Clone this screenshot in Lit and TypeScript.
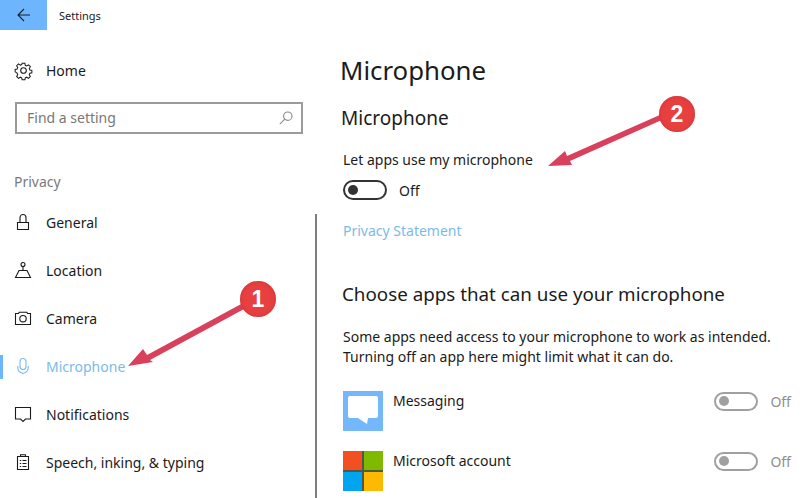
import { LitElement, html, css, svg } from "lit";
import { customElement } from "lit/decorators.js";

const icons: Record<string, unknown> = {
  lock: svg`<path d="M2.5 8.5h11v7h-11zM5 8.5V3.5a3 3 0 0 1 6 0v5" />`,
  location: svg`<circle cx="8" cy="2.5" r="2"/><path d="M8 4.5v4M.5 15.5L4 8.5h8l3.5 7z" />`,
  camera: svg`<path d="M.5 3.5h3l.7-1.2h7.6l.7 1.2h3v11H.5z"/><circle cx="8" cy="8.7" r="3.2"/>`,
  mic: svg`<rect x="5" y=".5" width="6" height="11" rx="3"/><path d="M2.8 8v2a5.2 5.2 0 0 0 10.4 0V8M8 15.2v1" />`,
  note: svg`<path d="M.5 1.5h15v11.5H10.5L8 15.5 5.5 13H.5z" />`,
  speech: svg`<path d="M2.5 2.5h11v13h-11zM5.5 2.5V.8h5v1.7M4.8 6.5h1.4M7.5 6.5h4M4.8 9.5h1.4M7.5 9.5h4M4.8 12.5h1.4M7.5 12.5h4" />`,
};

const navItems = [
  ["lock", "General"],
  ["location", "Location"],
  ["camera", "Camera"],
  ["mic", "Microphone"],
  ["note", "Notifications"],
  ["speech", "Speech, inking, & typing"],
] as const;

@customElement("app-root")
export class AppRoot extends LitElement {
  static styles = css`
    :host {
      display: block;
      position: relative;
      width: 808px;
      height: 498px;
      overflow: hidden;
      background: #fff;
      color: #1b1b1b;
      font-family: "Noto Sans", "Open Sans", sans-serif;
      font-size: 14px;
    }
    .titlebar { display: flex; align-items: center; height: 30px; }
    .back {
      width: 47px; height: 30px; background: #6db5fd;
      display: flex; align-items: center; justify-content: center;
    }
    .title { margin-left: 12px; font-size: 11px; }
    .body { display: flex; height: 468px; }
    .side { width: 315px; flex: none; }
    .home { display: flex; align-items: center; height: 24px; margin-top: 29px; }
    .ico { width: 46px; flex: none; display: flex; justify-content: center; margin-bottom: 2px; }
    .ico svg { fill: none; stroke: currentColor; stroke-width: 1.1; overflow: visible; }
    .txt { margin-bottom: 2px; }
    .search {
      box-sizing: border-box; margin: 19px 0 0 15px; width: 288px; height: 32px;
      border: 2px solid #9b9b9b; display: flex; align-items: center;
      justify-content: space-between; padding: 0 8px 0 10px; color: #777;
    }
    .search svg { fill: none; stroke: #8a8a8a; stroke-width: 1.1; }
    .group { margin: 37px 0 0 14px; height: 22px; line-height: 22px; color: #7a7a7a; }
    .item { position: relative; display: flex; align-items: center; height: 48px; }
    .item.active { color: #7cbbe8; }
    .item.active::before {
      content: ""; position: absolute; left: 0; top: 12px; width: 3px; height: 24px; background: #6db5fd;
    }
    .list { margin-top: 6px; }
    .rule { width: 2px; margin-top: 184px; background: #7d7d7d; flex: none; }
    .main { margin-left: 24px; flex: 1; min-width: 0; }
    h1 { margin: 20px 0 0 -1px; font-weight: 400; font-size: 25.8px; line-height: 40px; }
    h2 { margin: 14px 0 0; font-weight: 400; font-size: 19px; line-height: 28px; }
    .sub { margin-left: 1px; font-size: 18.8px; }
    .label { margin: 18px 0 0 2px; line-height: 20px; }
    .toggle-row { display: flex; align-items: center; margin: 10px 0 0 2px; height: 20px; gap: 12px; }
    .toggle {
      box-sizing: border-box; width: 44px; height: 20px; border: 2px solid #333; border-radius: 10px;
      display: flex; align-items: center; padding-left: 3px;
    }
    .toggle::before { content: ""; width: 10px; height: 10px; border-radius: 50%; background: #333; }
    .link { margin: 21px 0 0 2px; line-height: 20px; color: #7cbbe8; }
    .choose { margin-top: 39px; }
    .para { margin: 19px 0 0 2px; line-height: 20px; }
    .apps { margin: 24px 0 0 2px; display: flex; flex-direction: column; gap: 20px; }
    .app { display: flex; height: 40px; width: 448px; }
    .app-ico { width: 40px; height: 40px; flex: none; margin-right: 10px; }
    .app-name { flex: 1; line-height: 20px; }
    .app .toggle-row { margin: 0; color: #8f8f8f; }
    .app .toggle { border-color: #a0a0a0; height: 19px; }
    .app .toggle::before { background: #a0a0a0; }
    .arrows { position: absolute; inset: 0; pointer-events: none; }
    .badge {
      position: absolute; width: 36px; height: 36px; border-radius: 50%;
      background: #e8403f; color: #fff; font-weight: 700; font-size: 23px;
      display: flex; align-items: center; justify-content: center;
      font-family: "Liberation Sans", sans-serif;
      box-shadow: inset 0 0 4px #c9353f;
    }
    .b1 { left: 240px; top: 281px; }
    .b2 { left: 659px; top: 96px; }
  `;

  render() {
    return html`
      <div class="titlebar">
        <div class="back">
          <svg width="14" height="14" viewBox="0 0 14 14" fill="none" stroke="#10202e" stroke-width="1.1">
            <path d="M13 7H1M7 1L1 7l6 6" />
          </svg>
        </div>
        <div class="title">Settings</div>
      </div>
      <div class="body">
        <div class="side">
          <div class="home">
            <span class="ico">
              <svg width="17" height="17" viewBox="0 0 17 17">
                <circle cx="8.5" cy="8.5" r="2.8" />
                <path d="M7 .8h3l.4 2.2 1.6.7 1.9-1.2 2 2-1.2 1.9.7 1.6 2.1.4v2.6l-2.1.5-.7 1.6 1.2 1.9-2 2-1.9-1.2-1.6.7-.4 2.1H7l-.4-2.1-1.6-.7-1.9 1.2-2-2 1.2-1.9-.7-1.6L-.5 10V7.5l2.1-.5.7-1.6-1.2-1.9 2-2L5 2.9l1.6-.7z" transform="translate(.6 .5) scale(.93)" />
              </svg>
            </span>
            <span class="txt">Home</span>
          </div>
          <div class="search">
            <span class="txt">Find a setting</span>
            <svg width="14" height="14" viewBox="0 0 14 14"><circle cx="8.8" cy="5.2" r="4.2" /><path d="M5.8 8.2L.8 13.2" /></svg>
          </div>
          <div class="group">Privacy</div>
          <div class="list">
            ${navItems.map(
              ([icon, label]) => html`
                <div class="item ${label === "Microphone" ? "active" : ""}">
                  <span class="ico"><svg width="16" height="16" viewBox="0 0 16 16">${icons[icon]}</svg></span>
                  <span class="txt">${label}</span>
                </div>
              `,
            )}
          </div>
        </div>
        <div class="rule"></div>
        <div class="main">
          <h1>Microphone</h1>
          <h2>Microphone</h2>
          <div class="label">Let apps use my microphone</div>
          <div class="toggle-row"><span class="toggle"></span>Off</div>
          <div class="link">Privacy Statement</div>
          <h2 class="sub choose">Choose apps that can use your microphone</h2>
          <div class="para">
            Some apps need access to your microphone to work as intended.<br />
            Turning off an app here might limit what it can do.
          </div>
          <div class="apps">
            <div class="app">
              <svg class="app-ico" viewBox="0 0 40 40">
                <rect width="40" height="40" fill="#74b7fb" />
                <path d="M7 5h26a2 2 0 0 1 2 2v18a2 2 0 0 1-2 2h-8l-1 6-9-6H7a2 2 0 0 1-2-2V7a2 2 0 0 1 2-2z" fill="#fff" />
              </svg>
              <div class="app-name">Messaging</div>
              <div class="toggle-row"><span class="toggle"></span>Off</div>
            </div>
            <div class="app">
              <svg class="app-ico" viewBox="0 0 40 40">
                <rect width="40" height="40" fill="#4d5a4a" />
                <rect width="19" height="19" fill="#f25022" />
                <rect x="21" width="19" height="19" fill="#7fba00" />
                <rect y="21" width="19" height="19" fill="#00a4ef" />
                <rect x="21" y="21" width="19" height="19" fill="#ffb900" />
              </svg>
              <div class="app-name">Microsoft account</div>
              <div class="toggle-row"><span class="toggle"></span>Off</div>
            </div>
          </div>
        </div>
      </div>
      <svg class="arrows" width="808" height="498" viewBox="0 0 808 498" fill="#d9405c" stroke="none">
        <path d="M128 366L143 349L147 355L243 303L246 308L150 360L153 362Z" />
        <path d="M548 166L565 151L567 156L662 114L664 119L570 161L572 165Z" />
      </svg>
      <div class="badge b1">1</div>
      <div class="badge b2">2</div>
    `;
  }
}
